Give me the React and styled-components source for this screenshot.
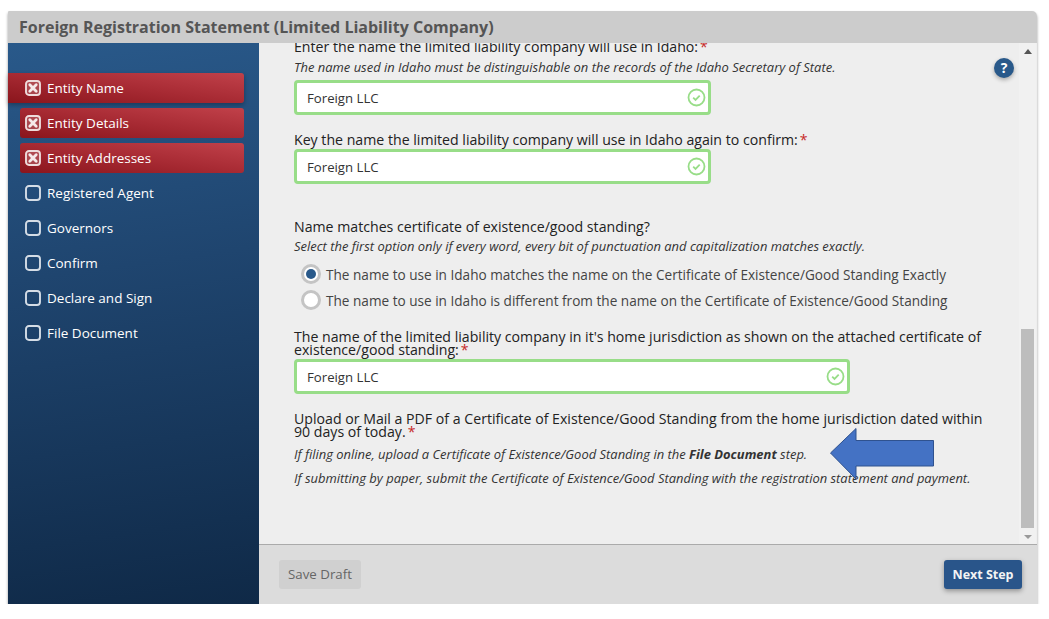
import React from "react";
import styled, { createGlobalStyle } from "styled-components";

const Global = createGlobalStyle`
  html, body { margin: 0; padding: 0; background: #fff; overflow: hidden; }
  * { box-sizing: border-box; }
  body { font-family: "Open Sans", "Liberation Sans", sans-serif; color: #222; }
`;
const Card = styled.div`
  position: relative;
  width: 1029px; height: 593px; margin: 11px 0 0 8px;
  display: flex; flex-direction: column;
  border-radius: 1px 5px 0 0;
  box-shadow: 0 2px 3px rgba(0,0,0,.4);
`;
const Header = styled.header`
  height: 32px; flex: none; background: #ccc; color: #555;
  border-radius: 1px 5px 0 0;
  font-size: 16px; font-weight: 700; line-height: 33px; padding-left: 11px;
`;
const Body = styled.div`flex: 1; display: flex; min-height: 0;`;
const Sidebar = styled.nav`
  width: 251px; flex: none; padding-top: 30px;
  background: linear-gradient(172deg, #29598a 0%, #1f456f 40%, #0f2947 100%);
  display: flex; flex-direction: column; gap: 5px;
`;
const Step = styled.div`
  height: 30px; width: ${p => p.$first ? 236 : 224}px; margin-left: ${p => p.$first ? 0 : 12}px;
  padding-left: ${p => p.$first ? 17 : 5}px;
  display: flex; align-items: center; gap: 6px;
  color: #fff; font-size: 13.5px; font-weight: 500;
  border-radius: ${p => p.$first ? "0 3px 3px 0" : "3px"};
  ${p => p.$error && "background: linear-gradient(to top right, #8a151c 0%, #a72a33 50%, #c1414a 100%);"}
  ${p => p.$first && "box-shadow: 0 2px 5px rgba(0,0,0,.3);"}
`;
const Main = styled.main`flex: 1; display: flex; flex-direction: column; min-width: 0; background: #eee;`;
const ScrollArea = styled.div`flex: 1; display: flex; min-height: 0; overflow: hidden;`;
const Content = styled.div`flex: 1; min-width: 0; padding: 0 35px; overflow: hidden; position: relative;`;
const Inner = styled.div`margin-top: -3px;`;
const Label = styled.div`
  font-size: 14.15px; line-height: 13px; color: #222; margin-top: ${p => p.$mt || 0}px;
`;
const Star = styled.span`color: #c62828; margin-left: 2px;`;
const Hint = styled.div`
  font-size: 12.96px; font-style: italic; color: #333; line-height: 16px; margin-top: ${p => p.$mt || 0}px;
  b { font-weight: 700; }
`;
const Field = styled.div`
  width: ${p => p.$w}px; height: 35px; margin-top: ${p => p.$mt || 0}px;
  border: 3px solid #98dd88; border-radius: 4px; background: #fff;
  display: flex; align-items: center; justify-content: space-between;
  padding: 0 2px 0 10px; font-size: 13.2px; color: #333;
`;
const RadioRow = styled.div`
  display: flex; align-items: center; gap: 5px; height: 24px; margin-left: 7px; margin-top: ${p => p.$mt}px;
  font-size: 13.6px; color: #444;
`;
const Radio = styled.span`
  width: 20px; height: 20px; border-radius: 50%; flex: none;
  border: 3px solid #c4c4c4; background: #fff;
  display: flex; align-items: center; justify-content: center;
  &::after { content: ""; width: 10px; height: 10px; border-radius: 50%; background: ${p => p.$on ? "#29598a" : "transparent"}; }
`;
const Help = styled.div`
  position: absolute; top: 47px; left: 986px; width: 20px; height: 20px; border-radius: 50%;
  background: #29598a; color: #fff; font-size: 14px; font-weight: 700; text-align: center; line-height: 20px;
  box-shadow: 0 2px 4px rgba(0,0,0,.3);
`;
const Bar = styled.div`
  width: 17px; flex: none; background: #f1f1f1; display: flex; flex-direction: column; align-items: center;
  padding: 6px 0 5px; margin-right: 1px;
`;
const ArrowUp = styled.i`width:0;height:0;border:4px solid transparent;border-top:0;border-bottom:5px solid #555;`;
const ArrowDown = styled.i`width:0;height:0;border:4px solid transparent;border-bottom:0;border-top:4px solid #999;margin-top:7px;`;
const Thumb = styled.div`width: 13px; height: 199px; background: #bdbdbd; margin-top: auto;`;
const Footer = styled.footer`
  height: 60px; flex: none; background: #dcdcdc; border-top: 1px solid #aaa;
  display: flex; align-items: center; justify-content: space-between; padding: 0 15px 1px 20px;
`;
const Draft = styled.div`
  width: 82px; height: 29px; background: #d0d0d0; color: #666; border-radius: 3px;
  font-size: 13.3px; font-weight: 500; line-height: 29px; text-align: center;
`;
const Next = styled.div`
  width: 78px; height: 29px; background: #29558a; color: #f4f4f4; border-radius: 3px;
  font-size: 12.5px; font-weight: 700; line-height: 29px; text-align: center;
  box-shadow: 0 2px 5px rgba(0,0,0,.35);
`;
const Callout = styled.svg`position: absolute; left: 822px; top: 417px; pointer-events: none;`;

const CheckBox = ({ x }) => (
  <svg width="16" height="16" viewBox="0 0 16 16" style={{ flex: "none" }}>
    <rect x="1" y="1" width="14" height="14" rx="3" fill={x ? "rgba(255,255,255,.18)" : "none"} stroke={x ? "#eedcdc" : "#d5dde6"} strokeWidth="1.9" />
    {x && <path d="M4.8 4.8l6.4 6.4M11.2 4.8l-6.4 6.4" stroke="#f5e9e9" strokeWidth="2.8" strokeLinecap="round" />}
  </svg>
);
const Ok = () => (
  <svg width="19" height="19" viewBox="0 0 19 19" style={{ flex: "none" }}>
    <circle cx="9.5" cy="9.5" r="8" fill="none" stroke="#98dd88" strokeWidth="1.8" />
    <path d="M6.2 9.7l2.3 2.2 4.2-4.2" fill="none" stroke="#98dd88" strokeWidth="1.8" />
  </svg>
);

const steps = ["Entity Name", "Entity Details", "Entity Addresses", "Registered Agent", "Governors", "Confirm", "Declare and Sign", "File Document"];

export default function App() {
  return (
    <Card>
      <Global />
      <Header>Foreign Registration Statement (Limited Liability Company)</Header>
      <Body>
        <Sidebar>
          {steps.map((s, i) => (
            <Step key={s} $first={i === 0} $error={i < 3}>
              <CheckBox x={i < 3} />
              <span>{s}</span>
            </Step>
          ))}
        </Sidebar>
        <Main>
          <ScrollArea>
            <Content>
              <Inner>
                <Label>Enter the name the limited liability company will use in Idaho:<Star>*</Star></Label>
                <Hint $mt={6}>The name used in Idaho must be distinguishable on the records of the Idaho Secretary of State.</Hint>
                <Field $w={417} $mt={5}>Foreign LLC<Ok /></Field>
                <Label $mt={18}>Key the name the limited liability company will use in Idaho again to confirm:<Star>*</Star></Label>
                <Field $w={417} $mt={3}>Foreign LLC<Ok /></Field>
                <Label $mt={36}>Name matches certificate of existence/good standing?</Label>
                <Hint $mt={5}>Select the first option only if every word, every bit of punctuation and capitalization matches exactly.</Hint>
                <RadioRow $mt={8}><Radio $on /><span>The name to use in Idaho matches the name on the Certificate of Existence/Good Standing Exactly</span></RadioRow>
                <RadioRow $mt={2}><Radio /><span>The name to use in Idaho is different from the name on the Certificate of Existence/Good Standing</span></RadioRow>
                <Label $mt={18}>The name of the limited liability company in it's home jurisdiction as shown on the attached certificate of existence/good standing:<Star>*</Star></Label>
                <Field $w={556} $mt={3}>Foreign LLC<Ok /></Field>
                <Label $mt={18}>Upload or Mail a PDF of a Certificate of Existence/Good Standing from the home jurisdiction dated within 90 days of today.<Star>*</Star></Label>
                <Hint $mt={8}>If filing online, upload a Certificate of Existence/Good Standing in the <b>File Document</b> step.</Hint>
                <Hint $mt={8}>If submitting by paper, submit the Certificate of Existence/Good Standing with the registration statement and payment.</Hint>
              </Inner>
            </Content>
            <Bar>
              <ArrowUp />
              <Thumb />
              <ArrowDown />
            </Bar>
          </ScrollArea>
          <Footer>
            <Draft>Save Draft</Draft>
            <Next>Next Step</Next>
          </Footer>
        </Main>
      </Body>
      <Help>?</Help>
      <Callout width="106" height="52" viewBox="0 0 106 52">
        <path d="M0.5 25L26 0.5V12.5H103.5V38H26V51Z" fill="#4472c4" stroke="#2f528f" strokeWidth="1" />
      </Callout>
    </Card>
  );
}
